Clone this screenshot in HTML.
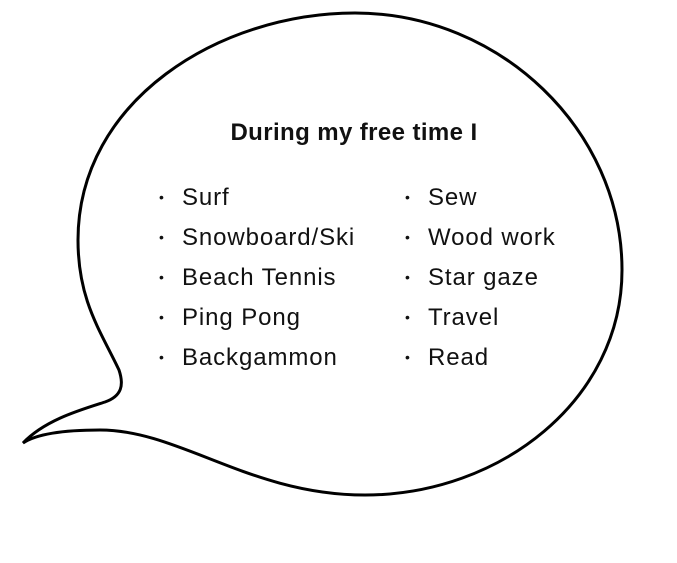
<!DOCTYPE html>
<html><head><style>
body{margin:0;width:677px;height:563px;background:#fff;position:relative;overflow:hidden;font-family:"Liberation Sans",Arial,sans-serif;color:#111}
svg{position:absolute;left:0;top:0}
.t{position:absolute;font-size:24px;line-height:26px;white-space:nowrap}
.h{font-weight:bold;left:0;width:708px;text-align:center;top:120px;letter-spacing:0.4px}
.l{position:absolute;top:178px;font-size:24px;line-height:40px;letter-spacing:0.9px;white-space:nowrap}
.b{position:absolute;top:177px;font-size:14px;line-height:40px}
</style></head><body>
<svg width="677" height="563"><path d="M23,443 C45,420 80,410 105,402 C122,396 124,385 119,370 C100,330 78,300 78,240 C78,100 220,13 355,13 C500,13 622,130 622,270 C622,400 500,495 365,495 C250,495 180,430 100,430 C60,430 35,435 23,443 Z" fill="none" stroke="#000" stroke-width="3"/></svg>
<div class="t h">During my free time I</div>
<div class="b" style="left:159px">•<br>•<br>•<br>•<br>•</div>
<div class="l" style="left:182px">Surf<br>Snowboard/Ski<br>Beach Tennis<br>Ping Pong<br>Backgammon</div>
<div class="b" style="left:405px">•<br>•<br>•<br>•<br>•</div>
<div class="l" style="left:428px">Sew<br>Wood work<br>Star gaze<br>Travel<br>Read</div>
</body></html>
